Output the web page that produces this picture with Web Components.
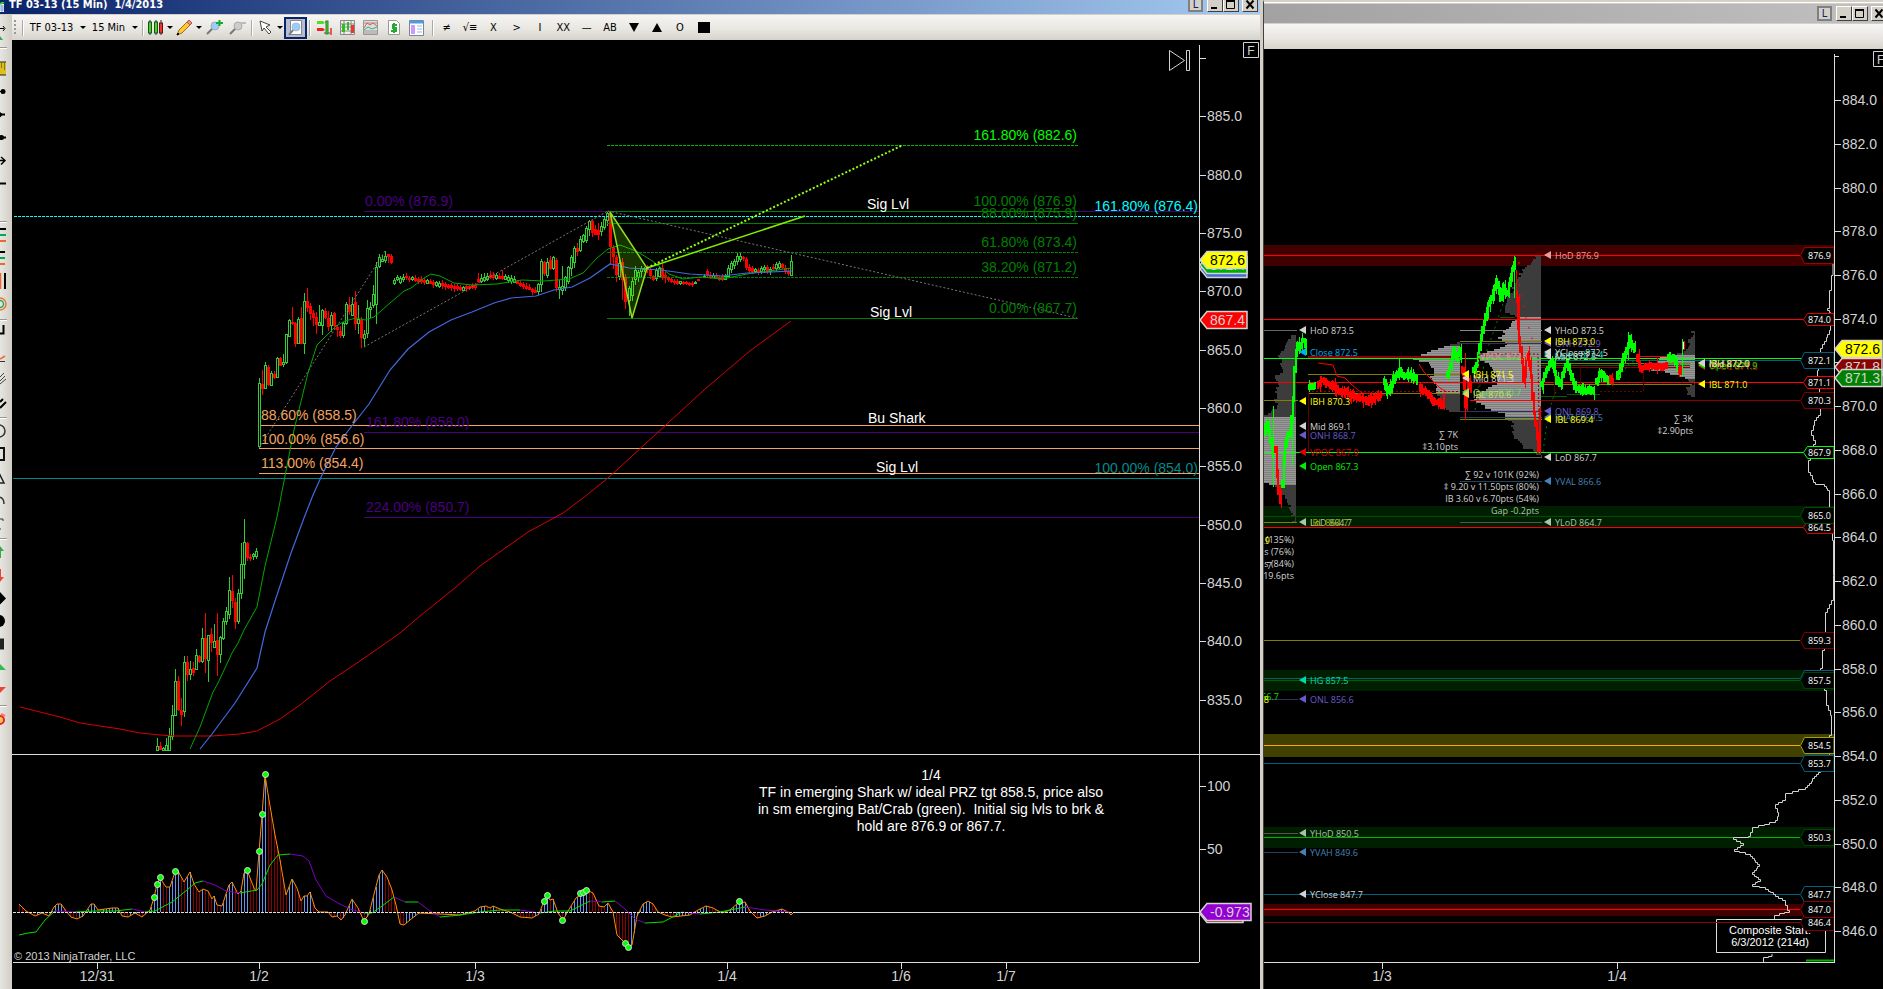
<!DOCTYPE html>
<html lang="en">
<head>
<meta charset="utf-8">
<title>TF 03-13 (15 Min) 1/4/2013</title>
<style>
  html, body { height: 100%; }
  body { margin: 0; background: #000; overflow: hidden; font-family: "Liberation Sans", Arial, sans-serif; }
</style>
</head>
<body>
<trading-desk>
  <chart-window slot="main" caption="TF 03-13 (15 Min)&nbsp; 1/4/2013" active>
    <chart-toolbar slot="toolbar"></chart-toolbar>
    <drawing-strip slot="side"></drawing-strip>
    <price-chart></price-chart>
  </chart-window>
  <chart-window slot="second">
    <profile-chart></profile-chart>
  </chart-window>
</trading-desk>

<script>
const UI = '"DejaVu Sans Condensed", "Noto Sans", sans-serif';

function define(name, html, setup) {
  const t = document.createElement('template');
  t.innerHTML = html;
  customElements.define(name, class extends HTMLElement {
    constructor() {
      super();
      this.attachShadow({ mode: 'open' }).append(t.content.cloneNode(true));
      if (setup) setup(this, this.shadowRoot);
    }
  });
}

/* Shared drawing helpers; all coordinates are in chart units. */
const h = (x1, x2, y, c, dash) =>
  `<line x1="${x1}" x2="${x2}" y1="${y + .5}" y2="${y + .5}" stroke="${c}"${dash ? ` stroke-dasharray="${dash}"` : ''}/>`;
const v = (x, y1, y2, c) => `<line x1="${x + .5}" x2="${x + .5}" y1="${y1}" y2="${y2}" stroke="${c}"/>`;
const txt = (x, y, s, c, anchor, cls) =>
  `<text x="${x}" y="${y}" fill="${c}"${anchor ? ` text-anchor="${anchor}"` : ''}${cls ? ` class="${cls}"` : ''}>${s}</text>`;
const poly = (pts, c, extra) => `<polyline points="${pts}" fill="none" stroke="${c}" ${extra || ''}/>`;
const nums = s => s.trim().split(/[\s,]+/).map(Number);
const pairs = s => { const n = nums(s), r = []; for (let i = 0; i < n.length; i += 2) r.push([n[i], n[i + 1]]); return r; };
const rand = seed => () => (seed = (seed * 16807) % 2147483647) / 2147483647;
const at = (pts, x) => {
  for (let i = 1; i < pts.length; i++) if (x <= pts[i][0]) {
    const [a, b] = pts[i - 1], [c, d] = pts[i];
    return b + (d - b) * (x - a) / (c - a || 1);
  }
  return pts[pts.length - 1][1];
};
const axisTag = (x, y, w, s, bg, fg) =>
  `<path d="M${x} ${y} l7 -8.500 h${w} v17 h-${w} z" fill="${bg}" stroke="#d3d3d3" stroke-width="1.500"/>` +
  (s ? txt(x + 10, y + 5, s, fg) : '');
const candle = (x, hi, lo, top, bot, up) => up
  ? `<path d="M${x + .5} ${hi}V${top}M${x + .5} ${bot}V${lo}" stroke="#32cd32"/><rect x="${x - .5}" y="${top + .5}" width="2" height="${Math.max(1, bot - top)}" fill="#000" stroke="#32cd32"/>`
  : `<path d="M${x + .5} ${hi}V${lo}" stroke="#f00"/><rect x="${x - 1}" y="${top}" width="3" height="${Math.max(2, bot - top)}" fill="#f00"/>`;

define('trading-desk', `
<style>
  :host { display: grid; grid-template-columns: 1263fr 620fr; height: 100vh; background: #d4d0c8; }
  ::slotted(*) { min-width: 0; min-height: 0; }
</style>
<slot name="main"></slot><slot name="second"></slot>`);

define('chart-window', `
<style>
  :host { display: grid; grid-template-rows: auto auto 1fr; box-sizing: border-box; background: #d4d0c8; border-right: 3px solid #d4d0c8; overflow: hidden; }
  :host(:not([active])) { border-right: 0; border-left: 1px solid #404040; border-top: 2px solid #d4d0c8; box-shadow: inset 0 1px #fff; }
  header { display: flex; align-items: flex-end; gap: 4px; height: 14px; padding: 0 2px 2px 0; box-sizing: border-box; overflow: hidden;
    background: linear-gradient(to right, #0a246a, #a6caf0); }
  :host(:not([active])) header { height: 19px; margin-top: 2px; padding: 0 0 2px; background: linear-gradient(to right, #a2a2a2, #c0c0c0); }
  h1 { flex: 1; margin: 0; font: bold 11px/14px ${UI}; color: #fff; white-space: nowrap; }
  .ico { width: 5px; height: 10px; flex: none; }
  button { flex: none; box-sizing: border-box; width: 16px; height: 15px; padding: 0; border: 1px solid; border-color: #fff #404040 #404040 #fff; background: #d4d0c8; display: flex; align-items: center; justify-content: center; }
  button svg { display: block; width: 12px; height: 11px; }
  .link { border: 2px solid #808080; width: 15px; color: #0a246a; font: 11px/11px ${UI}; }
  .pair { display: flex; margin-right: -1px; }
  :host(:not([active])) .close { margin-right: -4px; }
  .bar { min-height: 25px; border-top: 1px solid #d4d0c8; background: linear-gradient(#f6f5f3, #e8e7e2 55%, #d6d3cb); }
  .bar ::slotted(*) { height: 25px; }
  .body { display: flex; min-height: 0; min-width: 0; }
  .view { flex: 1; min-width: 0; background: #000; }
</style>
<header>
  <svg class="ico" viewBox="0 0 5 10"><rect y="2" width="4" height="8" fill="#fff"/><path d="M0 4h4M0 6h4M0 8h4M2 3v7" stroke="#7a9ad8"/><path d="M0 2l4-2" stroke="#3c3" stroke-width="2"/></svg>
  <h1></h1>
  <button class="link" aria-label="Link window">L</button>
  <span class="pair">
    <button aria-label="Minimize"><svg viewBox="0 0 12 11"><path d="M2 9h6" stroke="#000" stroke-width="2"/></svg></button>
    <button aria-label="Maximize"><svg viewBox="0 0 12 11"><path d="M1.500 1.500h8v8h-8z" fill="none" stroke="#000"/><path d="M1 2h9" stroke="#000" stroke-width="2"/></svg></button>
  </span>
  <button class="close" aria-label="Close"><svg viewBox="0 0 12 11"><path d="M2.500 1.500l7 8M9.500 1.500l-7 8" stroke="#000" stroke-width="2"/></svg></button>
</header>
<div class="bar"><slot name="toolbar"></slot></div>
<div class="body"><slot name="side"></slot><div class="view"><slot></slot></div></div>`,
(el, root) => {
  const cap = el.getAttribute('caption');
  if (cap) root.querySelector('h1').textContent = cap;
  else root.querySelector('.ico').remove();
});

const glass = (c, mark) => `<circle cx="9" cy="7" r="4" fill="${c}" stroke="#aaa"/><path d="M6 10l-5 5" stroke="#777" stroke-width="2"/>${mark}`;
define('chart-toolbar', `
<style>
  :host { display: flex; align-items: center; box-sizing: border-box; padding-left: 14px; font: 11px/14px ${UI}; }
  button { font: inherit; color: #000; border: 0; background: none; padding: 0; height: 22px; display: flex; align-items: center; justify-content: center; gap: 4px; flex: none; box-sizing: border-box; white-space: nowrap; }
  .grip { width: 2px; height: 15px; background: repeating-linear-gradient(#999 0 2px, transparent 2px 4px); margin-right: 6px; }
  i { flex: none; width: 1px; height: 16px; background: #aaa9a3; border-right: 1px solid #fff; margin: 0 2px; }
  .dd::after { content: ""; border: 3px solid transparent; border-top-color: #000; border-bottom: 0; }
  .sym { width: 64px; gap: 7px; } .per { width: 50px; gap: 7px; }
  .w { width: 28px; gap: 3px; } .s { width: 23px; }
  .draw { width: 29px; } .ptr { width: 29px; }
  .on { border: 1px solid #0a246a; background: #b6bdd2; box-shadow: inset 0 0 0 1px #0a246a; }
  svg { width: 17px; height: 17px; display: block; }
  .marks { display: grid; grid-template-columns: repeat(12, 1fr); width: 280px; }
  .marks button { width: auto; }
</style>
<span class="grip"></span><i style="margin-left:0"></i>
<button class="dd sym">TF 03-13</button>
<button class="dd per">15 Min</button><i></i>
<button class="dd w" aria-label="Chart style"><svg viewBox="0 0 17 17"><path d="M3 1v15M9 1v15M14 1v15" stroke="#222"/><rect x="1.500" y="3" width="3" height="11" fill="#5c2" stroke="#152"/><rect x="7.500" y="3" width="3" height="11" fill="#5c2" stroke="#152"/><rect x="12.500" y="4" width="3" height="10" fill="#e33" stroke="#611"/></svg></button>
<button class="dd w draw" aria-label="Draw"><svg viewBox="0 0 17 17"><path d="M1 16l2-5 9-9 3 3-9 9z" fill="#fc2" stroke="#964"/><path d="M11 3l2-2 3 3-2 2z" fill="#f88" stroke="#a55"/><path d="M1 16l2-1-1-1z" fill="#000" stroke="#000"/></svg></button>
<button class="s" aria-label="Zoom in"><svg viewBox="0 0 17 17">${glass('#9cf', '<path d="M13.500 1v6M10 4h7" stroke="#1a3" stroke-width="2"/>')}</svg></button>
<button class="s" aria-label="Zoom out"><svg viewBox="0 0 17 17">${glass('#ccc', '<path d="M11 4h6" stroke="#bbb" stroke-width="2"/>')}</svg></button><i></i>
<button class="dd w ptr" aria-label="Pointer"><svg viewBox="0 0 17 17"><path d="M3 2l2 10 2-3 5 6 2-2-5-5 4-2z" fill="#fff" stroke="#444"/></svg></button>
<button class="s on" aria-label="Data box" aria-pressed="true"><svg viewBox="0 0 17 17"><path d="M3.500 1.500h11v14h-11z" fill="#fff" stroke="#888"/><circle cx="9" cy="8" r="4" fill="#9cf" stroke="#abc"/><path d="M6 11l-4 5" stroke="#777" stroke-width="2"/></svg></button><i></i>
<button class="s" aria-label="Chart trader"><svg viewBox="0 0 17 17"><path d="M1 2h6l2 2-2 1H1z" fill="#5d2"/><path d="M1 9h6l2 2-2 1H1z" fill="#e22"/><path d="M9 3h3M8 14h8" stroke="#555"/><rect x="10" y="2" width="2" height="13" fill="#5c2" stroke="#283"/><rect x="14" y="9" width="2" height="7" fill="#e55"/></svg></button>
<button class="s" aria-label="Data series"><svg viewBox="0 0 17 17"><path d="M1.500 1.500h14v14h-14zM1 5h15M1 8h15M1 12h15M5 1v15M12 1v15" fill="#eee" stroke="#888"/><rect x="3" y="5" width="3" height="8" fill="#3b2"/><rect x="8" y="3" width="2" height="8" fill="#3b2"/><rect x="12" y="6" width="3" height="8" fill="#e33"/></svg></button>
<button class="s" aria-label="Indicators"><svg viewBox="0 0 17 17"><path d="M1.500 1.500h14v14h-14zM1 4h15M1 12h15M1 14h15" fill="#ddd" stroke="#999"/><path d="M2 9l3-5 3 2 3-2 4 3" fill="none" stroke="#e55"/><path d="M2 11l4-3 4 2 5-2" fill="none" stroke="#2b7"/></svg></button>
<button class="s" aria-label="Strategies"><svg viewBox="0 0 17 17"><path d="M3.500 1.500h8l3 3v11h-11z" fill="#fff" stroke="#999"/><path d="M12 6H8v3h3v3H6M9 4v10" fill="none" stroke="#2a3" stroke-width="2"/></svg></button>
<button class="s" aria-label="Properties"><svg viewBox="0 0 17 17"><path d="M1.500 1.500h14v15h-14z" fill="#fff" stroke="#789"/><path d="M2 3h13" stroke="#59d" stroke-width="3"/><rect x="3" y="6" width="4" height="9" fill="#c9f"/><path d="M9 7h5M9 10h5M9 13h5" stroke="#9bd"/></svg></button>
<i style="margin-left:4px;margin-right:1px"></i>
<span class="marks">
<button>≠</button><button>√≡</button><button>X</button><button>&gt;</button><button>I</button><button>XX</button><button>—</button><button>AB</button><button aria-label="Triangle down"><svg viewBox="0 0 17 17"><path d="M4 4h10l-5 9z"/></svg></button><button aria-label="Triangle up"><svg viewBox="0 0 17 17"><path d="M4 13h10L9 4z"/></svg></button><button>O</button><button aria-label="Block"><svg viewBox="0 0 17 17"><path d="M3 3h12v11H3z"/></svg></button>
</span>`);

/* The drawing tools show only their right half; the strip runs off the screen edge. */
const tools = [
  ['sep', 3],
  ['Ruler', '<path d="M0 5h6v13H0z" fill="#dcc020"/><path d="M0 5h6M0 18h6" stroke="#222"/><path d="M1.500 6v5M4.500 6v7" stroke="#8a7610"/>'],
  ['Line', '<path d="M0 11.500h4" stroke="#000"/><circle cx="3" cy="11.500" r="2.500"/>'],
  ['Ray', '<path d="M0 11.500h5" stroke="#000" stroke-width="2"/><path d="M0 9l3 2.500-3 3z"/>'],
  ['Extended line', '<circle cx="1.500" cy="11.500" r="2.500"/><path d="M0 11.500h6" stroke="#000" stroke-width="2"/>'],
  ['Arrow', '<path d="M0 11.500h5M1 8l4 3.500-4 4" fill="none" stroke="#000" stroke-width="1.500"/>'],
  ['Horizontal line', '<path d="M0 11.500h6" stroke="#000" stroke-width="2"/>'],
  ['Vertical line', ''],
  ['sep'],
  ['Fibonacci retracement', '<path d="M0 5h6" stroke="#000" stroke-width="2"/><path d="M0 11h6" stroke="#0a5" stroke-width="2"/><path d="M0 17h6" stroke="#e63" stroke-width="2"/>'],
  ['Fibonacci extension', '<path d="M0 5h5" stroke="#000" stroke-width="2"/><path d="M0 11h5" stroke="#0a5" stroke-width="2"/><path d="M0 17h5" stroke="#e63" stroke-width="2"/>'],
  ['Fibonacci time', '<path d="M.5 3v16" stroke="#e63" stroke-width="1.500"/><path d="M5 3v16" stroke="#000" stroke-width="2"/>'],
  ['Fibonacci circle', '<circle cy="11" r="6" fill="none" stroke="#e73" stroke-width="1.500"/><circle cy="11" r="3.500" fill="none" stroke="#2a6" stroke-width="1.500"/>'],
  ['sep'],
  ['Channel', '<path d="M0 11.500h3.500V3" fill="none" stroke="#000" stroke-width="2"/>'],
  ['Gann fan', '<path d="M0 14l5-3" stroke="#e63" stroke-width="1.500"/><path d="M0 16.500h5" stroke="#333"/>'],
  ['Andrews pitchfork', '<path d="M0 13l5-5M0 16l6-5M0 9l4-4" stroke="#444"/>'],
  ['Regression', '<path d="M0 11l3-3M0 17l6-6" stroke="#000" stroke-width="2"/>'],
  ['sep'],
  ['Ellipse', '<circle cx="-1" cy="11" r="6" fill="none" stroke="#333" stroke-width="1.500"/>'],
  ['Rectangle', '<path d="M0 5h4v12H0" fill="none" stroke="#111" stroke-width="2"/>'],
  ['Triangle', '<path d="M-1 7l5 10h-6" fill="none" stroke="#222" stroke-width="1.500"/>'],
  ['Arc', '<path d="M-2 8q6 0 6 7" fill="none" stroke="#333" stroke-width="1.500"/>'],
  ['Text', '<path d="M0 7h3v2M0 17h1" fill="none" stroke="#333"/>'],
  ['sep'],
  ['Arrow up', '<path d="M0 5l4 5H1v7H0z" fill="#3a4"/>'],
  ['Arrow down', '<path d="M0 18l4-5H1V5H0z" fill="#e43"/>'],
  ['Diamond', '<path d="M0 5l6 6.500-6 6z"/>'],
  ['Dot', '<circle cx="-1" cy="11" r="6"/>'],
  ['Square', '<path d="M0 5.500h4v11H0z" fill="#222"/>'],
  ['Triangle up', '<path d="M0 8l6 6H0z" fill="#3b5"/>'],
  ['Triangle down', '<path d="M0 8h6l-6 6z" fill="#e43"/>'],
  ['sep'],
  ['Remove drawings', '<circle cx="0" cy="12" r="4" fill="#fc5" stroke="#e22" stroke-width="2"/><path d="M1 6l4 2" stroke="#e77" stroke-width="2"/>'],
];
define('drawing-strip', `
<style>
  :host { display: flex; flex-direction: column; flex: none; width: 12px; margin-top: -25px; padding-top: 6px; position: relative; box-sizing: border-box; background: linear-gradient(to right, #e6e5e0, #d0cdc4); }
  button { border: 0; padding: 0; height: 23px; background: none; flex: none; }
  svg { display: block; width: 12px; height: 23px; }
  hr { box-sizing: border-box; width: 7px; height: 2px; margin: 3px 0 1px; border: 0; background: linear-gradient(#999 50%, #fff 50%); flex: none; }
  hr.first { margin-bottom: 8px; }
</style>
<button aria-label="Cursor"><svg viewBox="0 0 12 23"><path d="M0 7.500h4M3 5l2 2.500-2 2.500" fill="none" stroke="#000"/><path d="M0 15l3 4H0z" fill="#3a5"/></svg></button>
${tools.map(([n, d]) => n === 'sep' ? `<hr${d ? ' class="first"' : ''}>` : `<button aria-label="${n}"><svg viewBox="0 0 12 23">${d}</svg></button>`).join('')}`);

/* ---------- Price chart ---------- */
const bars = nums(`
157 738 750 746 750 1  160 742 750 746 750 0  163 747 750 748 750 1  166 738 750 745 750 1  169 728 750 736 750 1
172 705 740 715 736 1  175 669 716 681 715 1  178 676 711 681 710 0  181 698 726 710 715 0  184 656 717 662 711 1
187 656 681 662 675 0  190 661 680 669 674 1  193 662 676 668 673 0  196 649 670 655 669 1  199 655 663 656 662 0
202 628 663 638 661 1  205 613 673 638 659 0  208 635 682 635 660 1  211 628 652 634 643 0  214 624 648 641 647 1
217 613 676 640 655 0  220 636 663 637 654 1  223 618 640 621 638 1  226 607 625 611 621 1  229 577 619 590 614 1
232 575 608 591 601 0  235 598 629 602 622 0  238 589 624 593 621 1  241 543 599 564 593 1  244 519 579 542 564 1
247 542 561 543 558 0  250 554 561 557 559 0  253 553 560 554 556 1  256 548 559 551 556 1
259 378 448 383 446 1  262 370 395 384 389 0  265 362 389 365 388 1  268 365 386 367 385 0  271 371 386 373 385 1
274 371 379 374 378 0  277 357 378 358 377 1  280 357 366 358 366 0  283 354 367 362 364 1  286 334 364 334 362 1
289 319 337 320 336 1  292 307 325 322 323 0  295 322 347 323 344 0  298 317 344 319 343 1  301 307 344 318 344 0
304 293 354 301 343 1  307 288 312 301 308 0  310 303 320 306 314 0  313 310 326 313 318 0  316 312 334 317 325 0
319 305 326 322 325 1  322 309 335 310 325 1  325 308 319 311 318 0  328 311 331 318 327 0  331 312 332 315 325 1
334 312 330 313 326 0  337 325 337 327 330 0  340 326 338 331 336 0  343 322 338 323 335 1  346 302 325 304 323 1
349 297 315 305 312 0  352 297 316 304 315 1  355 291 330 302 324 0  358 305 334 319 323 1  361 317 348 320 338 0
364 330 347 334 338 1  367 300 338 308 333 1  370 302 318 307 309 1  373 285 308 294 305 1  376 262 324 267 304 1
379 254 268 257 266 1  382 255 262 259 261 1  385 251 263 256 260 1  388 254 263 254 257 0  391 254 264 256 263 0
394 278 285 280 283 1  397 275 281 277 279 1  400 276 284 278 282 1  403 274 282 277 279 1  406 273 280 276 278 0
409 276 282 278 280 0  412 276 281 277 279 1
538 283 295 284 291 1  541 259 292 261 284 1  544 261 276 262 274 0  547 258 278 262 275 1  550 256 270 260 269 0
553 256 270 257 268 1  556 258 292 260 288 0  559 280 299 287 289 1  562 266 295 286 290 1  565 276 291 277 287 1
568 266 284 267 281 1  571 255 276 257 268 1  574 246 268 248 262 1  577 243 256 248 252 0  580 236 252 239 250 1
583 234 243 235 241 1  586 226 243 228 240 1  589 220 236 221 229 1  592 220 237 221 233 0  595 225 235 229 235 0
598 223 240 230 235 0  601 222 236 226 231 1  604 216 230 219 227 1  607 211 226 213 220 1  610 211 264 213 247 0
613 245 269 247 257 0  616 255 282 257 275 0  619 260 280 263 276 1  622 258 300 262 280 0  625 274 309 277 302 0
629 286 316 288 300 1  632 277 301 281 295 1  635 266 285 270 279 1  638 270 282 272 277 1  641 266 278 268 271 1
644 267 272 268 269 1  647 265 273 268 270 0  650 268 279 270 276 0  653 275 281 276 280 0  656 268 281 270 278 1
659 266 278 268 276 1  662 264 280 268 277 0  665 272 283 275 278 0  668 276 282 277 280 0  671 277 283 279 282 0
674 279 285 281 283 0  677 279 285 281 284 0  680 281 285 281 283 1  683 281 285 282 284 0  686 281 285 282 283 0
689 282 286 283 285 0  692 281 287 283 285 0  695 281 284 282 283 1  698 279 281 279 281 0  704 274 278 276 277 1
707 269 278 271 276 0  710 272 279 275 277 0  713 273 278 275 277 1  716 273 278 275 277 0  719 275 281 277 280 0
722 274 281 276 280 0  725 274 280 276 279 1  728 265 278 268 276 1  731 261 273 263 269 1  734 259 269 261 265 1
737 252 265 256 261 1  740 253 262 256 259 1  743 256 261 257 259 0  746 257 270 259 268 0  749 264 273 267 271 0
752 266 274 268 272 0  755 268 273 269 271 1  758 268 275 270 271 0  761 266 274 268 271 1  764 265 273 267 269 1
767 265 274 267 272 0  770 267 275 269 271 1  773 264 271 267 269 0  776 262 271 264 268 1  779 261 269 263 267 1
782 263 269 264 268 0  785 265 274 268 272 0  788 268 276 271 274 0  791 255 276 261 275 1`);

function priceBars() {
  let s = '';
  for (let i = 0; i < bars.length; i += 6) s += candle(...bars.slice(i, i + 6));
  const drift = pairs('415 279 430 282 445 285 460 288 475 286 478 280 490 276 505 277 512 279 522 285 535 291'), r = rand(7);
  for (let x = 415; x < 537; x += 3) {
    const y = Math.round(at(drift, x)), w = x > 475 && x < 510 ? 5 : 2;
    const up = x > 475 && x < 515 ? r() > .4 : r() > .75;
    s += candle(x, y - 2 - Math.round(r() * w), y + 2 + Math.round(r() * 3), y - 1, y + 2, up);
  }
  return s;
}

const osc = pairs(`19 904 26 911 35 916 42 913 49 916 54 907 57 904 61 904 66 911 71 917 77 919 83 916 91 904 94 904 98 910 105 909 112 908 118 908 122 916 128 917 135 913 142 917 150 910 154 898 157 884 160 878 166 887 170 887 175 872 178 871 184 882 190 872 194 884 199 892 203 889 208 891 212 899 214 896 217 905 222 906 229 885 232 882 238 894 241 891 244 873 247 870 254 888 256 891 259 852 262 815 265 775 269 800 275 835 280 860 286 895 292 879 297 888 301 901 304 896 307 896 310 892 315 908 319 912 328 912 332 917 337 916 341 920 345 915 352 899 358 908 364 921 369 914 373 898 379 875 382 870 387 877 392 890 396 905 400 924 404 925 410 920 419 913 440 914 460 915 475 911 480 907 486 906 490 908 493 906 500 909 510 912 520 917 532 918 539 914 544 901 547 896 550 900 553 899 558 913 563 920 568 911 576 898 583 893 587 890 593 893 599 906 604 907 608 903 613 912 617 935 624 942 628 947 632 945 637 916 643 904 648 901 653 904 658 912 665 915 672 917 690 915 698 910 706 906 713 908 722 913 730 910 738 903 745 902 750 911 757 918 765 916 772 912 782 909 788 912 791 915 793 913`);
const signal = pairs(`19 935 28 933 36 932 45 920 55 911 75 912 95 911 115 911 132 909 145 912 155 911 172 902 187 890 195 883 203 881 215 885 226 891 240 893 257 890 262 884 270 865 278 855 290 854 303 856 309 861 316 880 326 896 338 903 350 909 364 913 372 913 382 906 394 897 405 902 418 902 430 911 440 917 460 915 480 912 500 910 520 910 540 913 555 911 570 911 590 901 602 902 615 901 625 909 635 919 645 923 663 922 682 912 700 914 720 912 745 907 765 910 790 912`);

function oscillator() {
  let s = '<g shape-rendering="crispEdges">';
  for (let x = 19; x < 794; x += 3) {
    const y = at(osc, x);
    if (Math.abs(y - 912) > 1) s += v(x, y, 912, y <= at(osc, x - 3) ? '#6495ed' : '#8b0000');
  }
  s += '</g>' + poly(osc.join(' '), '#ff8c00');
  for (let i = 1; i < signal.length; i++)
    s += poly(signal[i - 1] + ' ' + signal[i], signal[i][1] <= signal[i - 1][1] ? '#00e000' : '#8000c0');
  s += '<g shape-rendering="crispEdges">' + h(13, 793, 912, '#ddd', '3 1') + h(793, 1199, 912, '#ddd') + '</g>';
  for (const [x, y] of pairs('154 897 157 884 160 877 175 871 247 870 259 851 262 814 265 774 364 921 544 901 547 895 562 920 580 893 583 892 586 890 625 943 628 947 739 901'))
    s += `<circle cx="${x + .5}" cy="${y + .5}" r="3" fill="#0f0" stroke="#ddd"/>`;
  return s;
}

function priceAxis() {
  let s = v(1199, 45, 962, '#ddd') + h(13, 1199, 962, '#ddd') + h(12, 1260, 754, '#ddd') + h(1199, 1206, 58, '#ddd'), t = '';
  for (let p = 885; p >= 835; p -= 5) {
    const y = Math.round(233 + (875 - p) * 11.67);
    s += h(1199, 1206, y, '#ddd');
    t += txt(1207, y + 5, p + '.0', '#d3d3d3');
  }
  for (const [y, l] of [[786, '100'], [849, '50']]) { s += h(1199, 1206, y, '#ddd'); t += txt(1207, y + 5, l, '#d3d3d3'); }
  for (const [x, l] of [[97, '12/31'], [259, '1/2'], [475, '1/3'], [727, '1/4'], [901, '1/6'], [1006, '1/7']]) {
    s += v(x, 962, 969, '#ddd'); t += txt(x, 981, l, '#d3d3d3', 'middle');
  }
  return `<g shape-rendering="crispEdges">${s}</g>${t}`;
}

define('price-chart', `
<style>
  :host { display: block; width: 100%; height: 100%; }
  svg { display: block; width: 100%; height: 100%; font: 14px "Liberation Sans", Arial, sans-serif; }
  text { white-space: pre; }
  .small { font-size: 12px; } .legal { font-size: 11px; }
</style>
<svg viewBox="12 40 1248 949" preserveAspectRatio="xMinYMin meet" role="img" aria-label="TF 03-13 15 minute price chart">
<rect x="12" y="40" width="1248" height="949" fill="#000"/>
<g shape-rendering="crispEdges">
${h(364, 1199, 211, '#4b0082')}${h(364, 1199, 432, '#4b0082')}${h(364, 1199, 517, '#4b0082')}
${h(259, 1199, 425, '#f4a460')}${h(259, 1199, 448, '#f4a460')}${h(259, 1199, 473, '#f4a460')}
${h(13, 1199, 478, '#008b8b')}
${priceBars()}
${h(607, 1078, 211, '#008000')}${h(607, 1078, 223, '#008000')}${h(607, 1078, 318, '#008000')}
${h(607, 1078, 252, '#008000', '3 1')}${h(607, 1078, 277, '#008000', '3 1')}${h(607, 1078, 145, '#00b800', '3 1')}
${h(14, 1199, 216, '#0ff', '3 1')}
</g>
${poly('259,448 385,251', '#777', 'stroke-dasharray="2 2"')}${poly('364,347 608,211', '#777', 'stroke-dasharray="2 2"')}${poly('608,211 1077,318', '#777', 'stroke-dasharray="2 2"')}
${poly('20,707 40,712 60,717 80,723 100,726 120,729 140,733 160,735 175,736 212,736 240,734 257,731 280,719 300,705 330,681 360,661 400,633 420,616 456,587 480,566 528,532 563,513 583,498 608,478 644,445 704,390 751,350 791,321', '#d80000')}
${poly('190,749 200,727 213,692 218,683 232,653 238,643 244,630 257,607 265,566 277,517 294,430 308,373 317,345 336,326 345,321 356,318 365,320 374,317 390,303 404,291 411,288 424,278 431,274 440,276 454,283 472,285 497,284 522,280 544,281 569,279 583,273 597,258 608,249 620,245 636,251 651,260 669,274 683,279 701,277 722,279 747,274 769,271 792,268', '#00a800')}
${poly('200,749 212,734 235,703 257,668 265,632 275,601 291,553 304,518 313,495 322,475 336,447 351,427 369,404 390,370 408,349 429,332 451,320 472,312 494,303 511,298 536,296 554,290 572,287 590,278 610,264 629,268 661,270 690,274 722,276 747,273 792,271', '#4169e1', 'stroke-width="1.200"')}
<path d="M610 212l22 106 15-50z" fill="#7fff00" fill-opacity=".2" stroke="#90e020" stroke-width="1.500"/>
${poly('647,268 805,216', '#80f000', 'stroke-width="1.500"')}${poly('647,268 903,145', '#90ff10', 'stroke-width="2" stroke-dasharray="2 2"')}
${txt(365, 206, '0.00% (876.9)', '#4b0082')}${txt(366, 427, '161.80% (858.0)', '#4b0082')}${txt(366, 512, '224.00% (850.7)', '#4b0082')}
${txt(261, 420, '88.60% (858.5)', '#f4a460')}${txt(261, 444, '100.00% (856.6)', '#f4a460')}${txt(261, 468, '113.00% (854.4)', '#f4a460')}
${txt(1077, 140, '161.80% (882.6)', '#00ff00', 'end')}
${txt(1077, 206, '100.00% (876.9)', '#008000', 'end')}${txt(1077, 218, '88.60% (875.9)', '#008000', 'end')}${txt(1077, 247, '61.80% (873.4)', '#008000', 'end')}${txt(1077, 272, '38.20% (871.2)', '#008000', 'end')}${txt(1077, 313, '0.00% (867.7)', '#008000', 'end')}
${txt(1198, 211, '161.80% (876.4)', '#0ff', 'end')}${txt(1198, 473, '100.00% (854.0)', '#008b8b', 'end')}
${txt(867, 209, 'Sig Lvl', '#fff')}${txt(870, 317, 'Sig Lvl', '#fff')}${txt(868, 423, 'Bu Shark', '#fff')}${txt(876, 472, 'Sig Lvl', '#fff')}
${oscillator()}
${txt(931, 780, '1/4', '#fff', 'middle')}${txt(931, 797, 'TF in emerging Shark w/ ideal PRZ tgt 858.5, price also', '#fff', 'middle')}${txt(931, 814, 'in sm emerging Bat/Crab (green).&#160; Initial sig lvls to brk &amp;', '#fff', 'middle')}${txt(931, 831, 'hold are 876.9 or 867.7.', '#fff', 'middle')}
${txt(14, 960, '© 2013 NinjaTrader, LLC', '#d3d3d3', '', 'legal')}
${priceAxis()}
${axisTag(1200, 269, 40, '', '#4169e1')}${axisTag(1200, 265, 40, '872.4', '#00b000', '#d3d3d3')}${axisTag(1200, 260, 40, '872.6', '#ff0', '#000')}
${axisTag(1200, 320, 40, '867.4', '#f00', '#d3d3d3')}
${axisTag(1200, 914, 36, '', '#8b0000')}${axisTag(1200, 912, 44, '-0.973', '#9400d3', '#d3d3d3')}
<path d="M1169.500 50.500v20l15-10zM1186.500 50.500h3v20h-3z" fill="none" stroke="#d3d3d3"/>
<path d="M1243.500 42.500h15v15h-15z" fill="none" stroke="#d3d3d3"/>${txt(1251, 55, 'F', '#d3d3d3', 'middle', 'small')}
</svg>`);

/* ---------- Market profile chart ---------- */
const mark = (x, y, s, c) => `<path d="M${x} ${y}l7 -4v8z" fill="${c}"/>` + txt(x + 11, y + 4, s, c);
const tag = (y, s, c, big) => {
  const x = big ? 1800 : 1803, k = big ? 8 : 6;
  return `<path d="M${x}.5 ${y}.5l4 -${k}H1834v${2 * k}H${x + 4}.5z" fill="#000" stroke="${c}"/>` + txt(1831, y + 4, s, '#fff', 'end');
};
/* A volume profile hangs left from its right edge; rows are y, left-edge x. */
const profile = (edge, rows, lightFrom, lightTo) => {
  const p = pairs(rows), r = rand(edge);
  let s = '';
  for (let y = p[0][0]; y < p[p.length - 1][0]; y += 2) {
    const x = Math.round(at(p, y) + r() * 4 - 2), lit = y >= lightFrom && y < lightTo;
    s += `<rect x="${x}" y="${y}" width="${Math.max(1, edge - x)}" height="2" fill="${lit ? '#808080' : '#3c3c3c'}"/>`;
    if (lit) s += h(x, edge, y, '#999');
  }
  return s;
};
const runs = [
  [0, '1264 430 1267 425 1270 440 1273 455'], [1, '1275 450 1277 480 1279 500 1282 495'],
  [0, '1282 485 1284 450 1287 435 1290 430 1292 410 1294 370 1296 345 1299 350 1302 338 1305 345 1307 350'],
  [0, '1309 387 1316 387'], [1, '1318 384 1321 380 1325 383 1330 385 1338 391 1345 393 1355 397 1365 400 1375 397 1382 396'],
  [0, '1384 382 1387 392 1390 388 1394 377 1399 372 1402 376 1410 374 1417 380'],
  [1, '1420 389 1427 393 1432 401 1438 403 1442 405 1445 395'],
  [0, '1447 375 1450 365 1453 350 1456 358 1459 350 1461 360'], [1, '1462 370 1465 405 1468 380 1471 390'],
  [0, '1473 370 1476 365 1480 340 1484 320 1488 305 1492 296 1496 280 1500 298 1503 288 1507 295 1510 280 1513 264 1515 262'],
  [1, '1517 300 1518 335 1521 355 1523 380 1527 352 1530 370 1533 410 1536 430 1538 448 1540 400'],
  [0, '1541 385 1545 372 1549 365 1552 360 1556 380 1560 383 1564 368 1567 362 1571 378 1575 388 1580 390 1585 391 1594 391'],
  [0, '1596 382 1600 373 1604 378 1610 383'], [1, '1610 380 1614 382'],
  [0, '1617 376 1620 368 1623 357 1627 348 1629 340 1632 347 1636 348'],
  [1, '1637 357 1640 370 1645 366 1655 366 1667 366'], [0, '1668 357 1672 358 1675 361 1678 370'], [1, '1679 372 1682 368'], [0, '1683 345 1684 340'],
];
function tradeRuns() {
  const r = rand(41);
  let s = '';
  for (const [red, w] of runs) {
    const p = pairs(w), c = red ? '#f00' : '#0f0';
    let last = p[0][1];
    for (let x = p[0][0]; x <= p[p.length - 1][0]; x += 1.5) {
      const y = at(p, x), px = Math.round(x), a = Math.min(y, last) - 2 - r() * 3, b = Math.max(y, last) + 2 + r() * 3;
      s += `<rect x="${px - 1}" y="${Math.round(a)}" width="2" height="${Math.round(b - a)}" fill="${c}"/>`;
      if (r() > .6) s += v(px, Math.round(a - 5 * r()), Math.round(b + 5 * r()), c);
      last = y;
    }
  }
  return s + `<rect x="1682.500" y="341.500" width="2" height="8" fill="#fff" stroke="#f00"/>` + v(1273, 406, 487, '#0f0') + v(1465, 353, 420, '#f00') + v(1399, 359, 380, '#0f0') + v(1292, 400, 466, '#0f0') + v(1514, 256, 298, '#0f0') + v(1516, 270, 300, '#f00') + v(1517, 290, 330, '#f00') + v(1628, 332, 350, '#0f0') + v(1682, 339, 376, '#0f0');
}
const stepLine = s => { const p = pairs(s); let d = `M${p[0]}`;
  for (let i = 1; i < p.length; i++) { const [ax, ay] = p[i - 1], [x, y] = p[i], n = Math.max(1, Math.round(Math.min(Math.abs(y - ay), Math.abs(x - ax)) / 2));
    for (let k = 1; k <= n; k++) d += `V${Math.round(ay + (y - ay) * k / n) + .5}H${Math.round(ax + (x - ax) * k / n) + .5}`; }
  return `<path d="${d}" fill="none" stroke="#d3d3d3"/>`; };

function profileAxis() {
  let s = v(1834, 54, 962, '#ddd') + h(1264, 1835, 962, '#ddd') + h(1834, 1839, 56, '#ddd'), t = '';
  for (let p = 884; p >= 846; p -= 2) {
    const y = Math.round(275 + (876 - p) * 21.87);
    s += h(1834, 1841, y, '#ddd');
    if (p !== 872) t += txt(1842, y + 5, p + '.0', '#d3d3d3');
  }
  for (const [x, l] of [[1382, '1/3'], [1617, '1/4']]) { s += v(x, 962, 969, '#ddd'); t += txt(x, 981, l, '#d3d3d3', 'middle'); }
  return `<g shape-rendering="crispEdges">${s}</g>${t}`;
}
const band = (y, b, c) => `<rect x="1264" y="${y}" width="570" height="${b - y}" fill="${c}"/>`;
const W = '#d3d3d3', Y = '#ffff00', S = '#6a5acd', B = '#4682b4';

define('profile-chart', `
<style>
  :host { display: block; width: 100%; height: 100%; }
  svg { display: block; width: 100%; height: 100%; font: 14px "Liberation Sans", Arial, sans-serif; }
  .lab { font: 9px "Open Sans", "Noto Sans", sans-serif; }
  .box { font-size: 11px; } .small { font-size: 12px; }
</style>
<svg viewBox="1264 49 619 940" preserveAspectRatio="xMinYMin meet" role="img" aria-label="Market profile chart">
<rect x="1264" y="49" width="619" height="940" fill="#000"/>
<g shape-rendering="crispEdges">
${band(245, 266, '#400000')}${band(506, 527, '#001f00')}${band(670, 691, '#001f00')}${band(734, 757, '#404000')}${band(827, 848, '#001f00')}${band(904, 916, '#400000')}
${profile(1296, '335 1293 345 1284 355 1280 372 1281 375 1277 388 1277 400 1275 405 1277 412 1270 417 1262 480 1262 486 1276 500 1288 512 1292 523 1294', 416, 484)}
${profile(1460, '342 1459 346 1445 350 1430 353 1425 356 1412 359 1412 361 1424 363 1430 370 1436 377 1430 383 1435 393 1437 397 1440 402 1442 412 1450', 346, 394)}
${profile(1541, '255 1537 263 1529 273 1520 280 1517 290 1512 297 1508 305 1503 310 1505 317 1517 330 1505 337 1500 345 1507 353 1482 358 1478 363 1488 373 1497 383 1497 390 1483 399 1472 402 1480 407 1487 413 1503 423 1512 430 1513 440 1517 447 1525 450 1535 457 1540', 317, 419)}
${profile(1695, '331 1693 340 1690 347 1688 352 1685 353 1677 357 1660 363 1655 368 1643 370 1660 375 1680 377 1687 383 1692 387 1688 393 1685 397 1694', 354, 379)}
${h(1264, 1800, 255, '#f00')}${h(1264, 1804, 319, '#f00')}${h(1264, 1804, 358, '#0f0')}${h(1541, 1802, 360, '#006080')}${h(1264, 1804, 382, '#f00')}${h(1470, 1800, 400, '#900000')}${h(1470, 1541, 400, '#f00')}${h(1264, 1804, 452, '#0f0')}
${h(1264, 1800, 516, '#004d00')}${h(1264, 1804, 527, '#f00')}${h(1264, 1800, 640, '#808000')}${h(1264, 1800, 678, '#006464')}${h(1264, 1800, 680, '#006000')}${h(1264, 1800, 745, '#ffa500')}${h(1264, 1800, 763, '#006080')}
${h(1264, 1800, 837, '#00b400')}${h(1264, 1800, 894, '#006080')}${h(1264, 1800, 909, '#f00')}${h(1264, 1800, 922, '#900000')}
${h(1264, 1297, 330, '#666')}${h(1264, 1298, 400, '#808000')}${h(1264, 1297, 522, '#808000')}${h(1264, 1298, 699, '#352d66')}${h(1264, 1298, 833, '#555')}${h(1264, 1298, 852, '#234159')}
${h(1308, 1460, 356, '#900000')}${h(1308, 1460, 357, '#900000')}${h(1308, 1460, 374, '#808000')}${h(1308, 1460, 393, '#808000')}${h(1308, 1460, 391, '#900000', '2 2')}
${h(1460, 1542, 330, '#888')}${h(1460, 1542, 341, '#808000')}${h(1460, 1542, 343, '#352d66')}${h(1460, 1542, 411, '#352d66')}${h(1460, 1542, 417, '#234159')}${h(1460, 1542, 419, '#808000')}${h(1460, 1542, 457, '#666')}${h(1460, 1542, 481, '#234159')}${h(1460, 1542, 522, '#555')}
${h(1541, 1690, 363, '#808000')}${h(1541, 1690, 365, '#006000')}${h(1541, 1690, 367, '#900000')}${h(1541, 1692, 384, '#808000')}${h(1541, 1567, 396, '#006000')}${h(1567, 1600, 394, '#006000')}${h(1600, 1643, 391, '#700000', '2 2')}
${h(1640, 1670, 356, '#f00')}${h(1500, 1515, 317, '#006000')}
${v(1308, 391, 452, '#600000')}${v(1554, 364, 396, '#500000')}${v(1580, 364, 384, '#500000')}${v(1643, 370, 391, '#500000')}
${tradeRuns()}
</g>
${poly('1318,363 1333,365 1337,376 1345,378 1352,385 1362,393 1385,395', '#f00')}${poly('1419,364 1424,372 1432,380 1440,388 1447,392', '#f00')}
${poly('1475,410 1480,385 1487,350 1496,325 1504,300', '#008000', 'stroke-dasharray="2 4"')}${poly('1543,452 1546,430 1552,400 1556,392', '#008000', 'stroke-dasharray="2 4"')}${poly('1612,384 1620,375 1630,363 1636,360', '#008000', 'stroke-dasharray="2 3"')}${poly('1519,262 1520,290 1526,318 1534,345', '#f00', 'stroke-dasharray="2 9"')}
${poly('1478,400 1479,354 1538,354 1539,420', '#900000', 'stroke-dasharray="2 2"')}
<g class="lab">
${mark(1299, 330, 'HoD 873.5', W)}${mark(1299, 352, 'Close 872.5', '#00aeef')}${mark(1299, 401, 'IBH 870.3', Y)}${mark(1299, 426, 'Mid 869.1', W)}${mark(1299, 435, 'ONH 868.7', S)}${mark(1299, 452, 'VPOC 867.9', '#e00000')}${mark(1299, 466, 'Open 867.3', '#00f000')}${mark(1299, 522, 'LoD 864.7', '#a8c8a8')}${txt(1310, 526, 'IBL 864.7', '#a0b000')}
${mark(1299, 680, 'HG 857.5', '#00d8b0')}${mark(1299, 699, 'ONL 856.6', S)}${mark(1299, 833, 'YHoD 850.5', '#a8c0a8')}${mark(1299, 852, 'YVAH 849.6', B)}${mark(1299, 894, 'YClose 847.7', W)}
${txt(1480, 360, 'VPOC 872.1', '#f09090')}${mark(1462, 378, 'Mid 871.3', W)}${mark(1462, 374, 'IBH 871.5', Y)}${mark(1462, 392, 'Open 870.7', '#60e060')}${mark(1462, 394, 'IBL 870.6', '#d8d860')}
${mark(1544, 255, 'HoD 876.9', '#e0a0a0')}${mark(1544, 330, 'YHoD 873.5', W)}${mark(1544, 343, 'ONH 872.9', S)}${mark(1544, 341, 'IBH 873.0', Y)}${mark(1544, 354, 'Open 872.4', '#00e0c0')}${mark(1544, 352, 'YClose 872.5', W)}${mark(1544, 356, 'Mid 872.3', W)}
${mark(1544, 411, 'ONL 869.8', S)}${mark(1544, 417, 'YVAH 869.5', B)}${mark(1544, 419, 'IBL 869.4', Y)}${mark(1544, 457, 'LoD 867.7', W)}${mark(1544, 481, 'YVAL 866.6', B)}${mark(1544, 522, 'YLoD 864.7', '#a8c8a8')}
${mark(1698, 366, 'VPOC 871.8', '#e00000')}${mark(1698, 365, 'Open 871.9', '#00e000')}${mark(1698, 363, 'IBH 872.0', Y)}${mark(1698, 363, 'Mid 872.0', W)}${mark(1698, 384, 'IBL 871.0', Y)}
${txt(1458, 438, '∑ 7K', W, 'end')}${txt(1458, 450, '‡3.10pts', W, 'end')}
${txt(1539, 478, '∑ 92 v 101K (92%)', W, 'end')}${txt(1539, 490, '‡ 9.20 v 11.50pts (80%)', W, 'end')}${txt(1539, 502, 'IB 3.60 v 6.70pts (54%)', W, 'end')}${txt(1539, 514, 'Gap -0.2pts', '#a8c8a8', 'end')}
${txt(1693, 422, '∑ 3K', W, 'end')}${txt(1693, 434, '‡2.90pts', W, 'end')}
${txt(1294, 543, '(135%)', W, 'end')}${txt(1270, 544, '.9', Y, 'end')}${txt(1294, 555, 's (76%)', W, 'end')}${txt(1294, 567, 's (84%)', W, 'end')}${txt(1272, 569, '7', W, 'end')}${txt(1294, 579, '-19.6pts', W, 'end')}
${txt(1279, 700, '56.7', '#00e000', 'end')}${txt(1269, 703, '8', Y, 'end')}
</g>
${stepLine('1833 262 1831 275 1829 290 1827 308 1830 312 1829 330 1822 344 1818 352 1817 370 1820 395 1820 412 1814 420 1811 430 1815 440 1811 448 1808 460 1810 472 1815 482 1824 484 1829 490 1830 507 1832 515 1833 540 1833 575 1831 600 1825 612 1825 632 1822 650 1820 668 1826 690 1828 705 1831 715 1829 735 1829 754 1818 772 1805 787 1785 793 1785 798 1775 804 1778 812 1775 820 1752 827 1748 836 1733 837 1743 843 1734 849 1750 854 1759 864 1752 872 1760 879 1752 884 1765 887 1775 894 1785 900 1789 910 1774 915 1774 919')}
${stepLine('1772 954 1763 957 1761 962')}
<path d="M1716.500 919.500h109v33h-109z" fill="#000" stroke="#ddd"/>
${h(1716, 1800, 922, '#900000')}
${txt(1770, 934, 'Composite Start:', '#fff', 'middle', 'box')}${txt(1770, 946, '6/3/2012 (214d)', '#fff', 'middle', 'box')}
<g class="lab">
${tag(255, '876.9', '#a00000', 1)}${tag(319, '874.0', '#e00000')}${tag(360, '872.1', '#006080', 1)}${tag(382, '871.1', '#f00')}${tag(400, '870.3', '#800000', 1)}${tag(452, '867.9', '#0f0')}${tag(527, '864.5', '#e00000')}${tag(515, '865.0', '#004d00', 1)}
${tag(640, '859.3', '#800000', 1)}${tag(678, '', '#006080', 1)}${tag(680, '857.5', '#004000', 1)}${tag(763, '853.7', '#006080', 1)}${tag(745, '854.5', '#a0a000', 1)}${tag(837, '850.3', '#004000', 1)}${tag(894, '847.7', '#006080', 1)}${tag(922, '846.4', '#800000', 1)}${tag(909, '847.0', '#900000', 1)}
</g>
<path d="M1806 960.500h28" stroke="#00b000" stroke-width="2"/>
${profileAxis()}
${axisTag(1835, 367, 40, '871.8', '#8b0000', '#d3d3d3')}${axisTag(1835, 378, 40, '871.3', '#008000', '#d3d3d3')}${axisTag(1835, 349, 40, '872.6', '#ff0', '#000')}
<path d="M1873.500 51.500h15v15h-15z" fill="none" stroke="#d3d3d3"/>${txt(1877, 64, 'F', '#d3d3d3', '', 'small')}
</svg>`);
</script>
</body>
</html>
